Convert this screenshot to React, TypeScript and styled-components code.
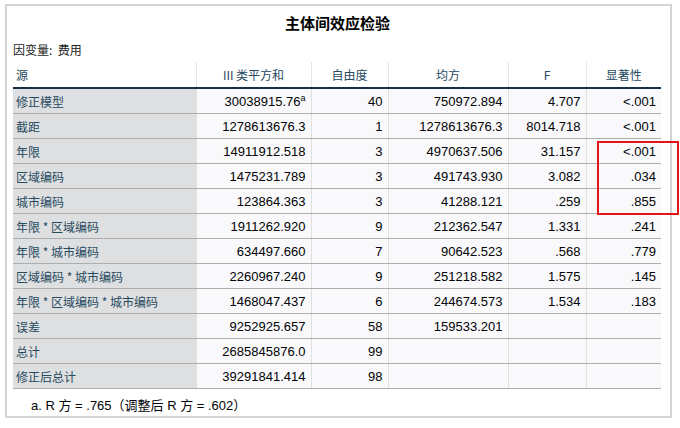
import styled, { createGlobalStyle } from 'styled-components';

const Global = createGlobalStyle`
  body { margin: 0; background: #fff; font-family: "Liberation Sans", Arial, "Noto Sans CJK SC", sans-serif; }
`;

const Page = styled.div`
  position: relative;
  width: 680px;
  height: 428px;
  padding: 4px 8px 0 5px;
  box-sizing: border-box;
`;

const Panel = styled.div`
  border: 2px solid #d4d4d4;
  height: 414px;
  box-sizing: border-box;
  padding: 0 8px 0 6px;
  background: #fff;
`;

const Title = styled.div`
  text-align: center;
  font-size: 15px;
  font-weight: bold;
  color: #000;
  padding-top: 6px;
  height: 25px;
  font-family: "Noto Sans CJK SC", sans-serif;
`;

const DepVar = styled.div`
  font-size: 12px;
  color: #222;
  height: 25px;
  line-height: 25px;
  font-family: "Noto Sans CJK SC", sans-serif;
`;

const Table = styled.table`
  border-collapse: collapse;
  width: 648px;
  table-layout: fixed;
  font-size: 13px;
`;

const Th = styled.th<{ $first?: boolean }>`
  font-weight: normal;
  color: #264a60;
  height: 25px;
  text-align: ${p => (p.$first ? 'left' : 'center')};
  font-size: 12px;
  font-family: "Noto Sans CJK SC", sans-serif;
  border-bottom: 2px solid #15314a;
  border-left: ${p => (p.$first ? 'none' : '1px solid #e6e6e6')};
  padding: 0 3px;
`;

const Label = styled.td`
  background: #dedfe1;
  color: #264a60;
  font-size: 12px;
  font-family: "Noto Sans CJK SC", sans-serif;
  height: 24px;
  padding: 0 3px;
  border-bottom: 1px solid #aeaeae;
  white-space: nowrap;
`;

const Cell = styled.td`
  background: #f9f9fb;
  color: #010205;
  text-align: right;
  padding: 0 5px;
  border-bottom: 1px solid #aeaeae;
  border-left: 1px solid #e0e0e0;
`;

const Foot = styled.td`
  font-size: 13px;
  color: #010205;
  padding: 6px 0 0 18px;
  border-top: 1px solid #15314a;
`;

const RedBox = styled.div`
  position: absolute;
  left: 597px;
  top: 141px;
  width: 78px;
  height: 70px;
  border: 2px solid #e4141b;
`;

const rows: [string, string, string, string, string, string][] = [
  ['修正模型', '30038915.76', '40', '750972.894', '4.707', '<.001'],
  ['截距', '1278613676.3', '1', '1278613676.3', '8014.718', '<.001'],
  ['年限', '14911912.518', '3', '4970637.506', '31.157', '<.001'],
  ['区域编码', '1475231.789', '3', '491743.930', '3.082', '.034'],
  ['城市编码', '123864.363', '3', '41288.121', '.259', '.855'],
  ['年限 * 区域编码', '1911262.920', '9', '212362.547', '1.331', '.241'],
  ['年限 * 城市编码', '634497.660', '7', '90642.523', '.568', '.779'],
  ['区域编码 * 城市编码', '2260967.240', '9', '251218.582', '1.575', '.145'],
  ['年限 * 区域编码 * 城市编码', '1468047.437', '6', '244674.573', '1.534', '.183'],
  ['误差', '9252925.657', '58', '159533.201', '', ''],
  ['总计', '2685845876.0', '99', '', '', ''],
  ['修正后总计', '39291841.414', '98', '', '', ''],
];

export default function App() {
  return (
    <Page>
      <Global />
      <Panel>
        <Title>主体间效应检验</Title>
        <DepVar>因变量:&nbsp; 费用</DepVar>
        <Table>
          <colgroup>
            <col style={{ width: 183 }} />
            <col style={{ width: 115 }} />
            <col style={{ width: 77 }} />
            <col style={{ width: 120 }} />
            <col style={{ width: 78 }} />
            <col style={{ width: 75 }} />
          </colgroup>
          <thead>
            <tr>
              <Th $first>源</Th>
              <Th>III 类平方和</Th>
              <Th>自由度</Th>
              <Th>均方</Th>
              <Th>F</Th>
              <Th>显著性</Th>
            </tr>
          </thead>
          <tbody>
            {rows.map((r, i) => (
              <tr key={r[0]}>
                <Label>{r[0]}</Label>
                <Cell>
                  {r[1]}
                  {i === 0 && <sup style={{ fontSize: 9 }}>a</sup>}
                </Cell>
                <Cell>{r[2]}</Cell>
                <Cell>{r[3]}</Cell>
                <Cell>{r[4]}</Cell>
                <Cell>{r[5]}</Cell>
              </tr>
            ))}
            <tr>
              <Foot colSpan={6}>a. R 方 = .765（调整后 R 方 = .602）</Foot>
            </tr>
          </tbody>
        </Table>
      </Panel>
      <RedBox />
    </Page>
  );
}
